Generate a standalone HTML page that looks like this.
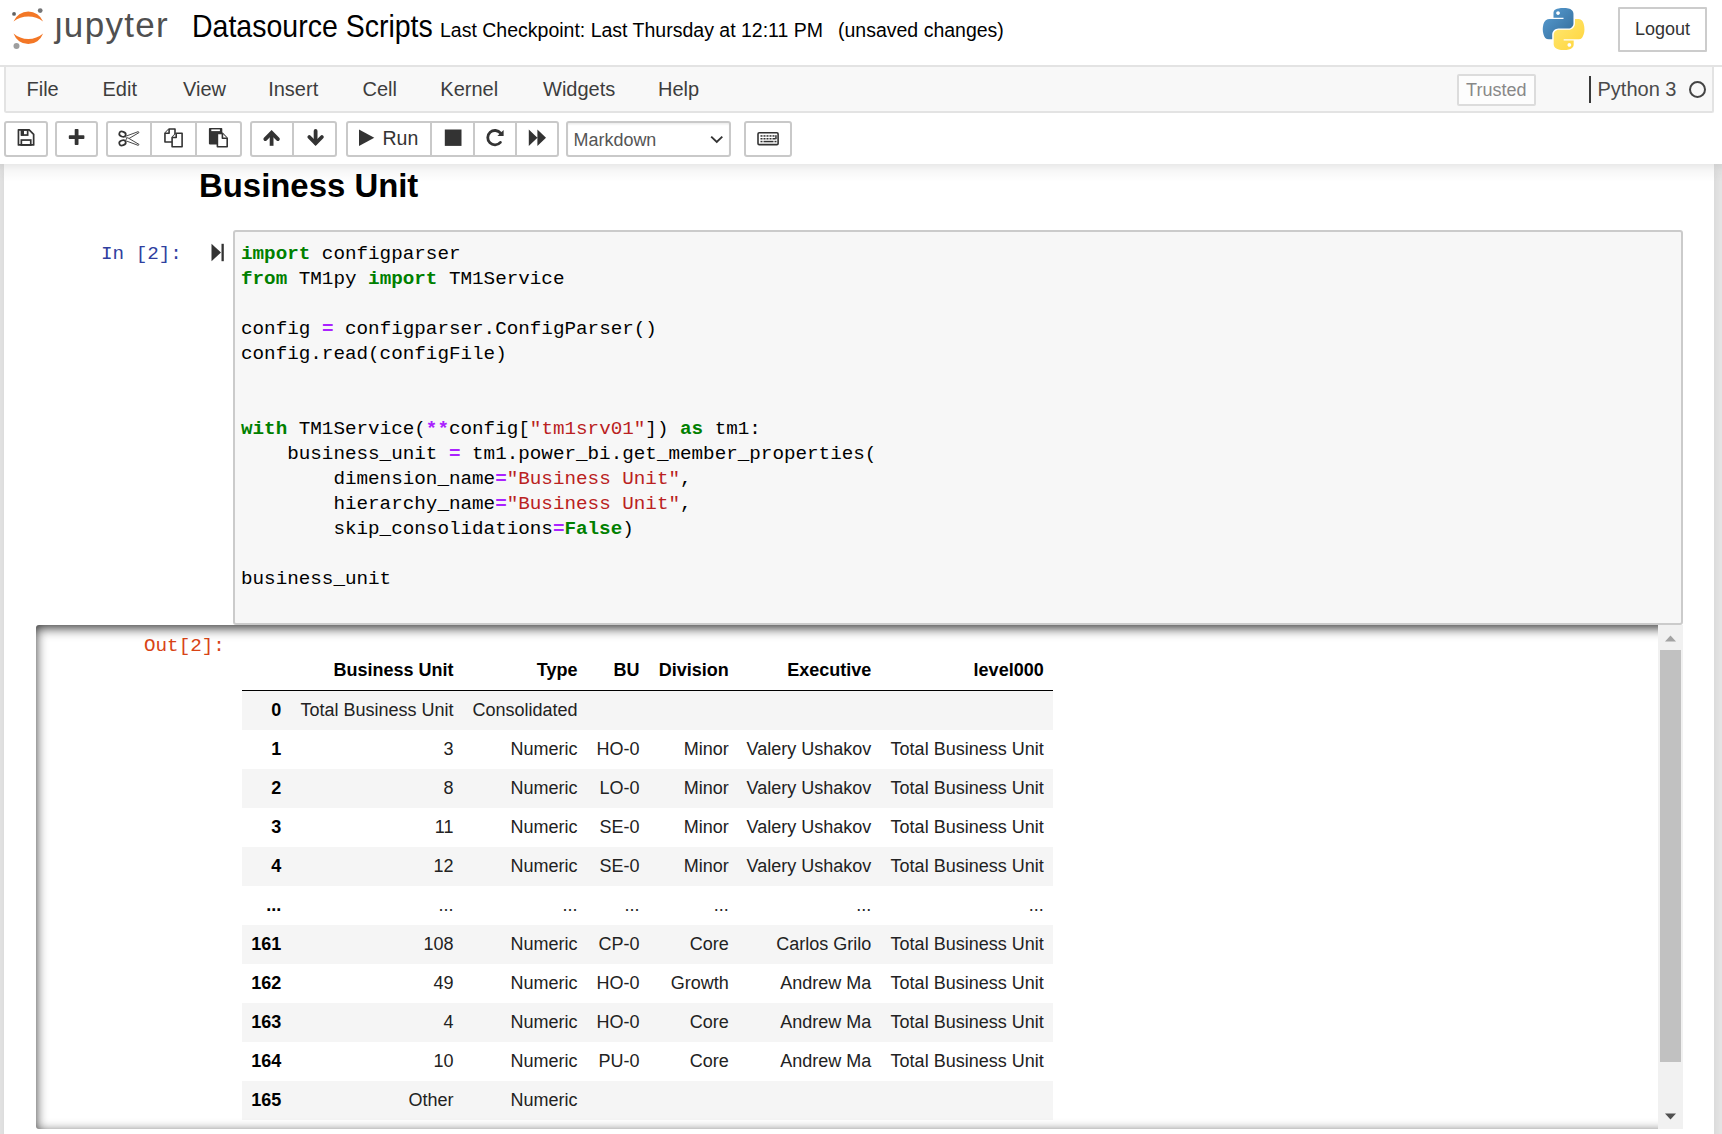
<!DOCTYPE html>
<html><head><meta charset="utf-8">
<style>
*{box-sizing:border-box;margin:0;padding:0}
html,body{width:1722px;height:1134px;overflow:hidden;background:#fff;font-family:"Liberation Sans",sans-serif;color:#000}
.a{position:absolute}
.mono{font-family:"Liberation Mono",monospace}
#site{position:absolute;left:0;top:164px;width:1722px;height:970px;background:#eee;overflow:hidden}
#nbc{position:absolute;left:4px;top:0;width:1710px;height:990px;background:#fff;box-shadow:0 0 18px 1.5px rgba(87,87,87,.2)}
#hdrshadow{position:absolute;left:0;top:164px;width:1722px;height:18px;background:linear-gradient(to bottom,rgba(0,0,0,.085),rgba(0,0,0,.03) 40%,rgba(0,0,0,0))}
.menu{position:absolute;top:78px;font-size:20px;color:#3d3d3d;line-height:22px}
.btn{position:absolute;top:121.3px;height:35.3px;border:2px solid #c9c9c9;border-radius:3px;background:#fff}
.div{position:absolute;top:0;width:2px;height:100%;background:#c9c9c9}
.code{position:absolute;left:241px;font-size:19.25px;line-height:25px;white-space:pre;color:#000}
.k{color:#008000;font-weight:bold}
.o{color:#aa22ff;font-weight:bold}
.s{color:#ba2121}
.t{position:absolute;font-size:18px;line-height:20px;white-space:nowrap;text-align:right;color:#222}
.th{font-weight:bold;color:#000}
.row{position:absolute;left:242px;width:811px;height:39px}
.odd{background:#f5f5f5}
</style></head><body>

<!-- header -->
<svg class="a" style="left:0;top:0" width="180" height="60" viewBox="0 0 180 60">
  <path d="M13.5,21.6 A15.95,15.95 0 0 1 43.1,21.6 A24,24 0 0 0 13.5,21.6 Z" fill="#f37726"/>
  <path d="M13.5,33.6 A15.7,15.7 0 0 0 43.1,33.6 A22.7,22.7 0 0 1 13.5,33.6 Z" fill="#f37726"/>
  <circle cx="40.2" cy="10.6" r="2.4" fill="#767677"/>
  <circle cx="14.05" cy="13.95" r="1.9" fill="#616262"/>
  <circle cx="16.5" cy="46.1" r="3" fill="#9e9e9e"/>
  <text x="54.8" y="36.6" font-family="Liberation Sans" font-size="35" letter-spacing="1.3" fill="#505050">&#x237;upyter</text>
</svg>
<div class="a" style="left:192px;top:8px;font-size:28.5px;line-height:34px;color:#000;transform:scaleY(1.1);transform-origin:0 8px">Datasource Scripts</div>
<div class="a" style="left:440px;top:19px;font-size:19.5px;line-height:22px;color:#000;white-space:pre">Last Checkpoint: Last Thursday at 12:11 PM</div>
<div class="a" style="left:838px;top:19px;font-size:19.5px;line-height:22px;color:#000;white-space:pre">(unsaved changes)</div>

<svg class="a" style="left:1542px;top:8px" width="43" height="42" viewBox="0 0 110 110">
 <defs>
  <linearGradient id="pb" x1="0" y1="0" x2="1" y2="1"><stop offset="0" stop-color="#5a9fd4"/><stop offset="1" stop-color="#306998"/></linearGradient>
  <linearGradient id="py" x1="0" y1="0" x2="1" y2="1"><stop offset="0" stop-color="#ffe873"/><stop offset="1" stop-color="#ffd43b"/></linearGradient>
 </defs>
 <path fill="url(#pb)" d="M54.9,0.1c-4.6,0-9,0.4-12.8,1.1C30.8,3.2,28.8,7.4,28.8,15.1v10.3h26.2v3.4H28.8H18.9c-7.6,0-14.3,4.6-16.4,13.3c-2.4,10-2.5,16.2,0,26.6c1.9,7.8,6.3,13.3,13.9,13.3h9v-12c0-8.7,7.5-16.3,16.4-16.3h26.2c7.3,0,13.1-6,13.1-13.3V15.1c0-7.1-6-12.4-13.1-13.6C63.5,0.4,59,0.1,54.9,0.1z M40.7,8.2c2.7,0,4.9,2.2,4.9,5c0,2.7-2.2,4.9-4.9,4.9c-2.7,0-4.9-2.2-4.9-4.9C35.8,10.4,38,8.2,40.7,8.2z"/>
 <path fill="url(#py)" d="M85,28.8v11.6c0,9-7.6,16.6-16.4,16.6H42.4c-7.2,0-13.1,6.2-13.1,13.3v25c0,7.1,6.2,11.3,13.1,13.3c8.3,2.4,16.3,2.9,26.2,0c6.6-1.9,13.1-5.8,13.1-13.3v-10H55.5v-3.3h26.2h13.1c7.6,0,10.5-5.3,13.1-13.3c2.7-8.2,2.6-16.1,0-26.6c-1.9-7.6-5.5-13.3-13.1-13.3H85z M70.3,91.8c2.7,0,4.9,2.2,4.9,4.9c0,2.7-2.2,5-4.9,5c-2.7,0-4.9-2.2-4.9-5C65.4,94,67.6,91.8,70.3,91.8z"/>
</svg>
<div class="a" style="left:1618px;top:7px;width:89px;height:44.5px;border:2px solid #ccc;border-radius:1px;font-size:18px;line-height:40px;text-align:center;color:#333">Logout</div>


<!-- menubar -->
<div class="a" style="left:4px;top:65px;width:1710px;height:48px;background:#f8f8f8;border:2px solid #e3e3e3;border-top:0;border-radius:0 0 2.5px 2.5px"></div>
<div class="a" style="left:0;top:65.2px;width:1722px;height:1.8px;background:#e3e3e3"></div>
<div class="menu" style="left:26.5px">File</div>
<div class="menu" style="left:102.5px">Edit</div>
<div class="menu" style="left:183px">View</div>
<div class="menu" style="left:268.2px">Insert</div>
<div class="menu" style="left:362.5px">Cell</div>
<div class="menu" style="left:440.3px">Kernel</div>
<div class="menu" style="left:543px">Widgets</div>
<div class="menu" style="left:658px">Help</div>

<div class="a" style="left:1457px;top:73.5px;width:78.5px;height:32px;border:2px solid #dcdcdc;border-radius:2px;font-size:18px;line-height:28px;text-align:center;color:#888;background:#fdfdfd">Trusted</div>
<div class="a" style="left:1589px;top:76px;width:2.2px;height:27px;background:#3a3a3a"></div>
<div class="menu" style="left:1597.5px;color:#4a4a4a">Python 3</div>
<div class="a" style="left:1688.5px;top:81px;width:17px;height:17px;border:2.5px solid #444;border-radius:50%"></div>

<!-- toolbar -->
<div class="btn" style="left:4.3px;width:43.3px"></div>
<div class="btn" style="left:55.4px;width:42.2px"></div>
<div class="btn" style="left:105.5px;width:136.3px"><div class="div" style="left:42.2px"></div><div class="div" style="left:87.4px"></div></div>
<div class="btn" style="left:249.8px;width:87.7px"><div class="div" style="left:40.7px"></div></div>
<div class="btn" style="left:345.8px;width:213.4px"><div class="div" style="left:82.6px"></div><div class="div" style="left:125.2px"></div><div class="div" style="left:167.2px"></div></div>
<div class="btn" style="left:566.3px;width:164.4px;box-shadow:inset 0 1.5px 1.5px rgba(0,0,0,.075)"></div>
<div class="btn" style="left:744.3px;width:47.3px"></div>

<svg class="a" style="left:0;top:0" width="800" height="170" viewBox="0 0 800 170">
 <g fill="none" stroke="#333" stroke-width="1.7">
  <path d="M18.45,129.85 H29.2 L33.65,134.3 V144.95 H18.45 Z" stroke-linejoin="round"/>
  <rect x="21.65" y="129.85" width="6" height="5.2"/>
  <rect x="21.35" y="140.05" width="9.4" height="5"/>
 </g>
 <rect x="20.8" y="129.5" width="3.2" height="6" fill="#333"/>
 <rect x="68.8" y="135.3" width="15.6" height="3.8" rx="0.8" fill="#333"/>
 <rect x="74.7" y="129" width="3.8" height="16" rx="0.8" fill="#333"/>
 <g fill="none" stroke="#333" stroke-width="1.7">
  <ellipse cx="122.5" cy="134.2" rx="3.3" ry="2.5" transform="rotate(20 122.5 134.2)"/>
  <ellipse cx="122.5" cy="142.8" rx="3.3" ry="2.5" transform="rotate(-20 122.5 142.8)"/>
 </g>
 <g fill="#fff" stroke="#333" stroke-width="0.9" stroke-linejoin="round">
  <path d="M125.3,136.4 L138.3,131.6 L139,132.6 L127.5,139.4 Z"/>
  <path d="M125.3,140.6 L138.3,145.4 L139,144.4 L127.5,137.6 Z"/>
 </g>
 <g fill="#fff" stroke="#333" stroke-width="1.6" stroke-linejoin="round">
  <path d="M164.95,142 V133.2 L169.1,129 H175 V142 Z"/>
  <path d="M164.95,133.2 H169.1 V129"/>
  <path d="M172.1,146.7 V137.5 L176.2,133.3 H182.1 V146.7 Z"/>
  <path d="M172.1,137.5 H176.2 V133.3"/>
 </g>
 <rect x="208.9" y="128.1" width="13.4" height="16.3" rx="0.8" fill="#333"/>
 <rect x="211.3" y="129.4" width="8.6" height="1.7" fill="#fff"/>
 <g fill="#fff" stroke="#333" stroke-width="1.6" stroke-linejoin="round">
  <path d="M217.4,146.7 V133.4 H222.4 L227.2,138.2 V146.7 Z"/>
  <path d="M222.4,133.4 V138.2 H227.2"/>
 </g>
 <g fill="none" stroke="#333" stroke-width="3.8" stroke-linejoin="miter">
  <path d="M271.6,145.8 V132.8"/>
  <path d="M265.3,139.1 L271.6,132.8 L277.9,139.1" stroke-linecap="round"/>
  <path d="M315.6,130.9 V142.8" stroke-linecap="round"/>
  <path d="M309.3,137 L315.6,143.3 L321.9,137" stroke-linecap="round"/>
 </g>
 <path d="M359,129.5 L374.3,137.8 L359,146.1 Z" fill="#333"/>
 <rect x="444.8" y="129.5" width="16.7" height="16.4" fill="#333"/>
 <path d="M500.6,133.2 A7.2,7.2 0 1 0 500.4,142.4" fill="none" stroke="#333" stroke-width="2.8" stroke-linecap="round"/>
 <path d="M503.6,130 V136 H497.4 Z" fill="#333"/>
 <path d="M528.8,129.5 L537.4,137.8 L528.8,146.1 Z M537.4,129.5 L546,137.8 L537.4,146.1 Z" fill="#333"/>
 <path d="M711.2,136.6 L716.75,142 L722.3,136.6" fill="none" stroke="#333" stroke-width="1.9"/>
 <rect x="758" y="132.8" width="20.1" height="11.8" rx="1.2" fill="none" stroke="#333" stroke-width="1.6"/>
 <g fill="#333">
  <rect x="760.5" y="135.2" width="2" height="1.5"/><rect x="763.5" y="135.2" width="2" height="1.5"/><rect x="766.5" y="135.2" width="2" height="1.5"/><rect x="769.5" y="135.2" width="2" height="1.5"/><rect x="772.5" y="135.2" width="2" height="1.5"/><rect x="775.2" y="135.2" width="1.5" height="4"/>
  <rect x="760.5" y="138" width="2" height="1.5"/><rect x="763.5" y="138" width="2" height="1.5"/><rect x="766.5" y="138" width="2" height="1.5"/><rect x="769.5" y="138" width="2" height="1.5"/><rect x="772.5" y="138" width="3" height="1.5"/>
  <rect x="760.5" y="140.8" width="2" height="1.5"/><rect x="763.5" y="140.8" width="10" height="1.5"/><rect x="774.5" y="140.8" width="2" height="1.5"/>
 </g>
</svg>
<div class="a" style="left:382.5px;top:126.5px;font-size:19.5px;line-height:22px;color:#333">Run</div>
<div class="a" style="left:573.6px;top:129px;font-size:17.95px;line-height:22px;color:#555">Markdown</div>

<!-- site -->
<div id="site"><div id="nbc"></div></div>
<div id="hdrshadow"></div>

<!-- markdown heading -->
<div class="a" style="left:199px;top:166px;font-size:32.9px;line-height:40px;font-weight:bold;color:#000">Business Unit</div>

<!-- input prompt -->
<div class="a mono" style="left:101px;top:241.5px;font-size:19.25px;line-height:25px;color:#303f9f;white-space:pre">In [2]:</div>
<svg class="a" style="left:211px;top:243px" width="14" height="19" viewBox="0 0 14 19"><path d="M0.5,0.8 L10,9.5 L0.5,18.2 Z" fill="#333"/><rect x="10.5" y="0.8" width="2.3" height="17.4" fill="#333"/></svg>

<!-- input area -->
<div class="a" style="left:233px;top:230.3px;width:1450px;height:395px;background:#f7f7f7;border:2px solid #cbcbcb;border-radius:3px"></div>
<div class="code mono" style="top:242px"><span class="k">import</span> configparser
<span class="k">from</span> TM1py <span class="k">import</span> TM1Service

config <span class="o">=</span> configparser.ConfigParser()
config.read(configFile)


<span class="k">with</span> TM1Service(<span class="o">**</span>config[<span class="s">"tm1srv01"</span>]) <span class="k">as</span> tm1:
    business_unit <span class="o">=</span> tm1.power_bi.get_member_properties(
        dimension_name<span class="o">=</span><span class="s">"Business Unit"</span>,
        hierarchy_name<span class="o">=</span><span class="s">"Business Unit"</span>,
        skip_consolidations<span class="o">=</span><span class="k">False</span>)

business_unit</div>

<!-- output -->
<div class="a" id="out" style="left:36px;top:625px;width:1647px;height:504px;background:#fff;overflow:hidden;border-radius:3px">
</div>
<div class="a mono" style="left:144px;top:634px;font-size:19.25px;line-height:25px;color:#d84315;white-space:pre">Out[2]:</div>

<div id="table">
<div class="a" style="left:242px;top:689.5px;width:811px;height:1.5px;background:#000"></div>
<div class="row odd" style="top:690.5px"></div>
<div class="row odd" style="top:768.5px"></div>
<div class="row odd" style="top:846.5px"></div>
<div class="row odd" style="top:924.5px"></div>
<div class="row odd" style="top:1002.5px"></div>
<div class="row odd" style="top:1080.5px"></div>
<div class="t th" style="left:203.5px;top:659.5px;width:250px">Business Unit</div>
<div class="t th" style="left:327.5px;top:659.5px;width:250px">Type</div>
<div class="t th" style="left:389.5px;top:659.5px;width:250px">BU</div>
<div class="t th" style="left:478.7px;top:659.5px;width:250px">Division</div>
<div class="t th" style="left:621.2px;top:659.5px;width:250px">Executive</div>
<div class="t th" style="left:793.7px;top:659.5px;width:250px">level000</div>
<div class="t th" style="left:31.2px;top:699.5px;width:250px">0</div>
<div class="t" style="left:203.5px;top:699.5px;width:250px">Total Business Unit</div>
<div class="t" style="left:327.5px;top:699.5px;width:250px">Consolidated</div>
<div class="t th" style="left:31.2px;top:738.5px;width:250px">1</div>
<div class="t" style="left:203.5px;top:738.5px;width:250px">3</div>
<div class="t" style="left:327.5px;top:738.5px;width:250px">Numeric</div>
<div class="t" style="left:389.5px;top:738.5px;width:250px">HO-0</div>
<div class="t" style="left:478.7px;top:738.5px;width:250px">Minor</div>
<div class="t" style="left:621.2px;top:738.5px;width:250px">Valery Ushakov</div>
<div class="t" style="left:793.7px;top:738.5px;width:250px">Total Business Unit</div>
<div class="t th" style="left:31.2px;top:777.5px;width:250px">2</div>
<div class="t" style="left:203.5px;top:777.5px;width:250px">8</div>
<div class="t" style="left:327.5px;top:777.5px;width:250px">Numeric</div>
<div class="t" style="left:389.5px;top:777.5px;width:250px">LO-0</div>
<div class="t" style="left:478.7px;top:777.5px;width:250px">Minor</div>
<div class="t" style="left:621.2px;top:777.5px;width:250px">Valery Ushakov</div>
<div class="t" style="left:793.7px;top:777.5px;width:250px">Total Business Unit</div>
<div class="t th" style="left:31.2px;top:816.5px;width:250px">3</div>
<div class="t" style="left:203.5px;top:816.5px;width:250px">11</div>
<div class="t" style="left:327.5px;top:816.5px;width:250px">Numeric</div>
<div class="t" style="left:389.5px;top:816.5px;width:250px">SE-0</div>
<div class="t" style="left:478.7px;top:816.5px;width:250px">Minor</div>
<div class="t" style="left:621.2px;top:816.5px;width:250px">Valery Ushakov</div>
<div class="t" style="left:793.7px;top:816.5px;width:250px">Total Business Unit</div>
<div class="t th" style="left:31.2px;top:855.5px;width:250px">4</div>
<div class="t" style="left:203.5px;top:855.5px;width:250px">12</div>
<div class="t" style="left:327.5px;top:855.5px;width:250px">Numeric</div>
<div class="t" style="left:389.5px;top:855.5px;width:250px">SE-0</div>
<div class="t" style="left:478.7px;top:855.5px;width:250px">Minor</div>
<div class="t" style="left:621.2px;top:855.5px;width:250px">Valery Ushakov</div>
<div class="t" style="left:793.7px;top:855.5px;width:250px">Total Business Unit</div>
<div class="t th" style="left:31.2px;top:894.5px;width:250px">...</div>
<div class="t" style="left:203.5px;top:894.5px;width:250px">...</div>
<div class="t" style="left:327.5px;top:894.5px;width:250px">...</div>
<div class="t" style="left:389.5px;top:894.5px;width:250px">...</div>
<div class="t" style="left:478.7px;top:894.5px;width:250px">...</div>
<div class="t" style="left:621.2px;top:894.5px;width:250px">...</div>
<div class="t" style="left:793.7px;top:894.5px;width:250px">...</div>
<div class="t th" style="left:31.2px;top:933.5px;width:250px">161</div>
<div class="t" style="left:203.5px;top:933.5px;width:250px">108</div>
<div class="t" style="left:327.5px;top:933.5px;width:250px">Numeric</div>
<div class="t" style="left:389.5px;top:933.5px;width:250px">CP-0</div>
<div class="t" style="left:478.7px;top:933.5px;width:250px">Core</div>
<div class="t" style="left:621.2px;top:933.5px;width:250px">Carlos Grilo</div>
<div class="t" style="left:793.7px;top:933.5px;width:250px">Total Business Unit</div>
<div class="t th" style="left:31.2px;top:972.5px;width:250px">162</div>
<div class="t" style="left:203.5px;top:972.5px;width:250px">49</div>
<div class="t" style="left:327.5px;top:972.5px;width:250px">Numeric</div>
<div class="t" style="left:389.5px;top:972.5px;width:250px">HO-0</div>
<div class="t" style="left:478.7px;top:972.5px;width:250px">Growth</div>
<div class="t" style="left:621.2px;top:972.5px;width:250px">Andrew Ma</div>
<div class="t" style="left:793.7px;top:972.5px;width:250px">Total Business Unit</div>
<div class="t th" style="left:31.2px;top:1011.5px;width:250px">163</div>
<div class="t" style="left:203.5px;top:1011.5px;width:250px">4</div>
<div class="t" style="left:327.5px;top:1011.5px;width:250px">Numeric</div>
<div class="t" style="left:389.5px;top:1011.5px;width:250px">HO-0</div>
<div class="t" style="left:478.7px;top:1011.5px;width:250px">Core</div>
<div class="t" style="left:621.2px;top:1011.5px;width:250px">Andrew Ma</div>
<div class="t" style="left:793.7px;top:1011.5px;width:250px">Total Business Unit</div>
<div class="t th" style="left:31.2px;top:1050.5px;width:250px">164</div>
<div class="t" style="left:203.5px;top:1050.5px;width:250px">10</div>
<div class="t" style="left:327.5px;top:1050.5px;width:250px">Numeric</div>
<div class="t" style="left:389.5px;top:1050.5px;width:250px">PU-0</div>
<div class="t" style="left:478.7px;top:1050.5px;width:250px">Core</div>
<div class="t" style="left:621.2px;top:1050.5px;width:250px">Andrew Ma</div>
<div class="t" style="left:793.7px;top:1050.5px;width:250px">Total Business Unit</div>
<div class="t th" style="left:31.2px;top:1089.5px;width:250px">165</div>
<div class="t" style="left:203.5px;top:1089.5px;width:250px">Other</div>
<div class="t" style="left:327.5px;top:1089.5px;width:250px">Numeric</div>
</div>
<!--TABLEEND-->

<!-- output inset shadow overlay -->
<div class="a" style="left:36px;top:625px;width:1647px;height:504px;border-radius:3px;box-shadow:inset 0 3px 12px rgba(0,0,0,.8);pointer-events:none"></div>
<!-- scrollbar -->
<div class="a" style="left:1658px;top:625px;width:25px;height:504px;background:#f1f1f1"></div>
<svg class="a" style="left:1664px;top:632.5px" width="13" height="10" viewBox="0 0 13 10"><path d="M1,8.5 L6.5,2.5 L12,8.5 Z" fill="#a3a3a3"/></svg>
<div class="a" style="left:1660px;top:650px;width:21px;height:412px;background:#c1c1c1"></div>
<svg class="a" style="left:1664px;top:1112px" width="13" height="10" viewBox="0 0 13 10"><path d="M1,1.5 L6.5,7.5 L12,1.5 Z" fill="#505050"/></svg>

</body></html>
